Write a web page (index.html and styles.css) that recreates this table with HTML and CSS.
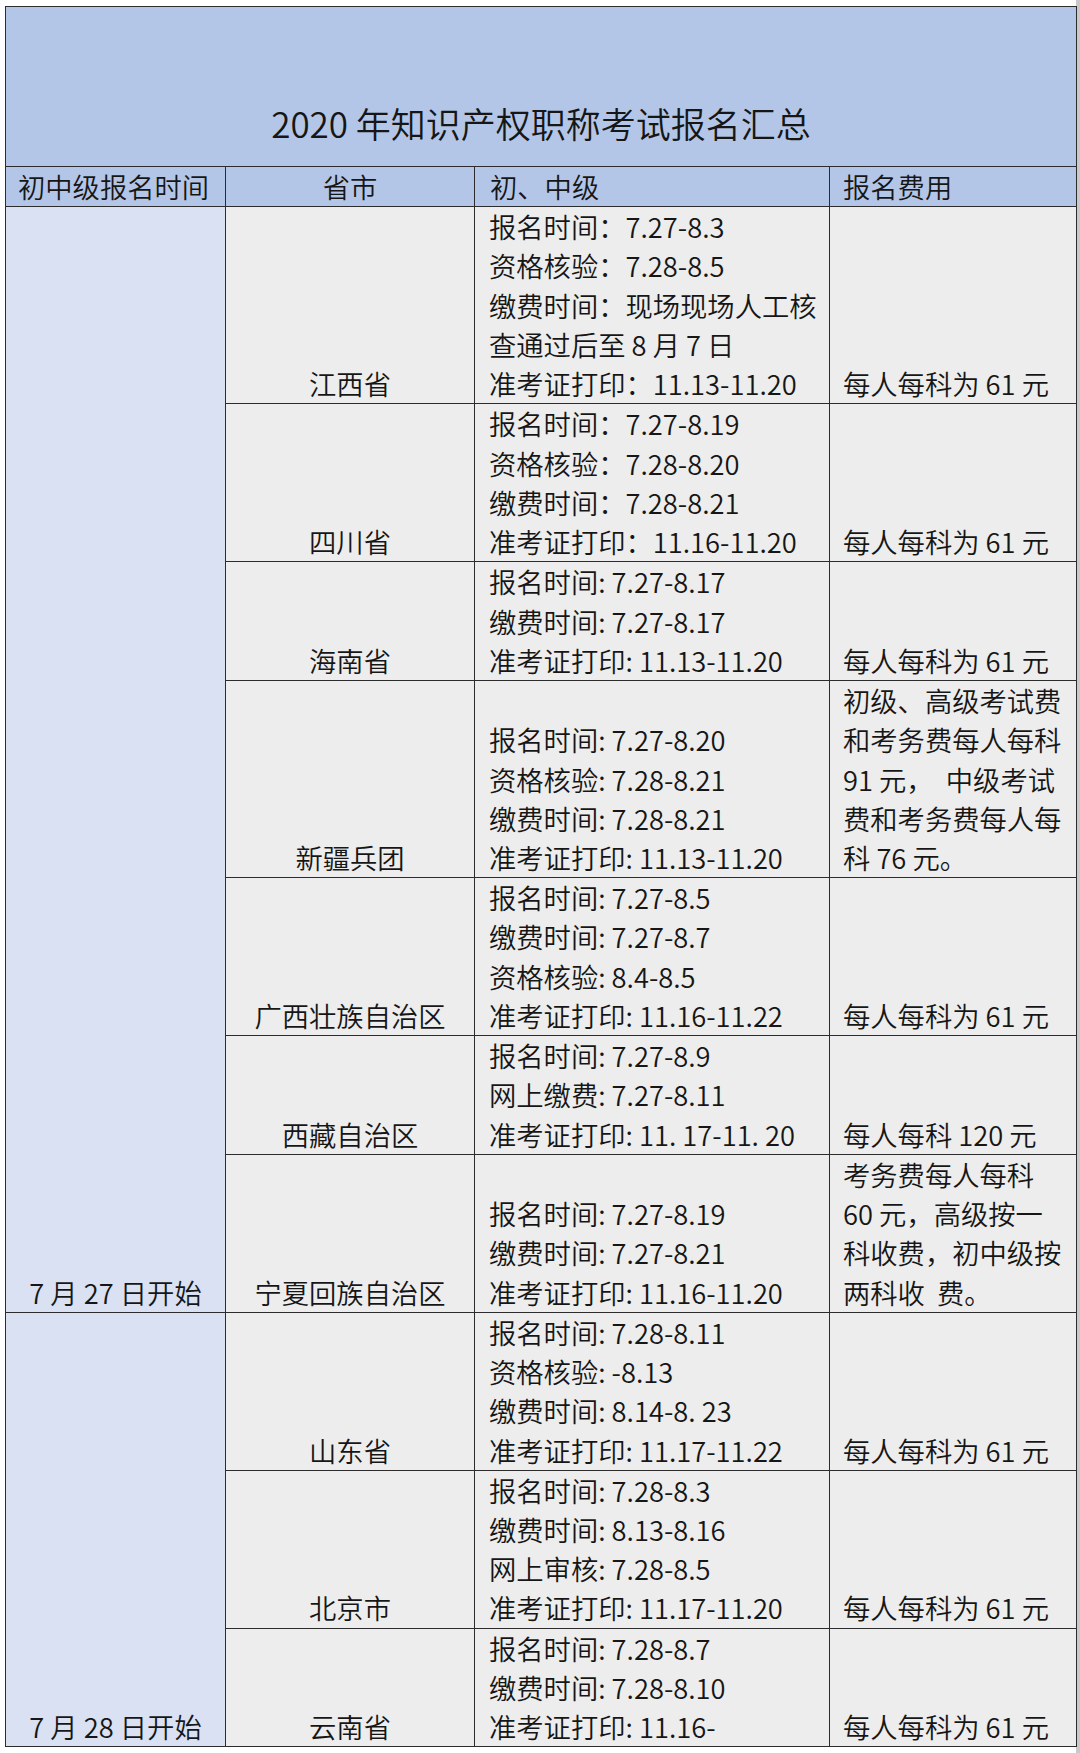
FILE: index.html
```html
<!DOCTYPE html>
<html lang="zh-CN">
<head>
<meta charset="utf-8">
<title>2020年知识产权职称考试报名汇总</title>
<link rel="stylesheet" href="styles.css">
</head>
<body>
<table class="sheet">
  <colgroup>
    <col class="c-date">
    <col class="c-prov">
    <col class="c-time">
    <col class="c-fee">
  </colgroup>
  <tr>
    <td class="title" colspan="4">2020 年知识产权职称考试报名汇总</td>
  </tr>
  <tr class="head">
    <td class="h-left">初中级报名时间</td>
    <td class="h-center">省市</td>
    <td class="h-time">初、中级</td>
    <td class="h-fee">报名费用</td>
  </tr>
  <tr>
    <td class="date" rowspan="7">7 月 27 日开始</td>
    <td class="prov">江西省</td>
    <td class="time">报名时间：7.27-8.3<br>资格核验：7.28-8.5<br>缴费时间：现场现场人工核<br>查通过后至 8 月 7 日<br>准考证打印：11.13-11.20</td>
    <td class="fee">每人每科为 61 元</td>
  </tr>
  <tr>
    <td class="prov">四川省</td>
    <td class="time">报名时间：7.27-8.19<br>资格核验：7.28-8.20<br>缴费时间：7.28-8.21<br>准考证打印：11.16-11.20</td>
    <td class="fee">每人每科为 61 元</td>
  </tr>
  <tr>
    <td class="prov">海南省</td>
    <td class="time">报名时间: 7.27-8.17<br>缴费时间: 7.27-8.17<br>准考证打印: 11.13-11.20</td>
    <td class="fee">每人每科为 61 元</td>
  </tr>
  <tr>
    <td class="prov">新疆兵团</td>
    <td class="time">报名时间: 7.27-8.20<br>资格核验: 7.28-8.21<br>缴费时间: 7.28-8.21<br>准考证打印: 11.13-11.20</td>
    <td class="fee">初级、高级考试费<br>和考务费每人每科<br>91 元，&nbsp; 中级考试<br>费和考务费每人每<br>科 76 元。</td>
  </tr>
  <tr>
    <td class="prov">广西壮族自治区</td>
    <td class="time">报名时间: 7.27-8.5<br>缴费时间: 7.27-8.7<br>资格核验: 8.4-8.5<br>准考证打印: 11.16-11.22</td>
    <td class="fee">每人每科为 61 元</td>
  </tr>
  <tr>
    <td class="prov">西藏自治区</td>
    <td class="time">报名时间: 7.27-8.9<br>网上缴费: 7.27-8.11<br>准考证打印: 11. 17-11. 20</td>
    <td class="fee">每人每科 120 元</td>
  </tr>
  <tr>
    <td class="prov">宁夏回族自治区</td>
    <td class="time">报名时间: 7.27-8.19<br>缴费时间: 7.27-8.21<br>准考证打印: 11.16-11.20</td>
    <td class="fee">考务费每人每科<br>60 元，高级按一<br>科收费，初中级按<br>两科收&nbsp; 费。</td>
  </tr>
  <tr>
    <td class="date" rowspan="3">7 月 28 日开始</td>
    <td class="prov">山东省</td>
    <td class="time">报名时间: 7.28-8.11<br>资格核验: -8.13<br>缴费时间: 8.14-8. 23<br>准考证打印: 11.17-11.22</td>
    <td class="fee">每人每科为 61 元</td>
  </tr>
  <tr>
    <td class="prov">北京市</td>
    <td class="time">报名时间: 7.28-8.3<br>缴费时间: 8.13-8.16<br>网上审核: 7.28-8.5<br>准考证打印: 11.17-11.20</td>
    <td class="fee">每人每科为 61 元</td>
  </tr>
  <tr>
    <td class="prov">云南省</td>
    <td class="time">报名时间: 7.28-8.7<br>缴费时间: 7.28-8.10<br>准考证打印: 11.16-</td>
    <td class="fee">每人每科为 61 元</td>
  </tr>
</table>
</body>
</html>
```

FILE: styles.css
```css
html, body {
  margin: 0;
  padding: 0;
}

body {
  background: linear-gradient(to right, #ffffff 1076px, #c9c9c9 1076px);
  font-family: "Noto Sans CJK SC", "Noto Sans", sans-serif;
  font-weight: 350;
  color: #161616;
  padding: 6px 0 0 5px;
  min-height: 1753px;
  box-sizing: border-box;
}

.sheet {
  border-collapse: collapse;
  table-layout: fixed;
  width: 1071px;
  font-size: 27.3px;
  line-height: 39.23px;
}

.c-date { width: 220px; }
.c-prov { width: 249px; }
.c-time { width: 355px; }
.c-fee  { width: 247px; }

.sheet td {
  border: 1px solid #2c2c2c;
  padding: 0;
  vertical-align: bottom;
  white-space: nowrap;
  overflow: hidden;
  background: #ededed;
}

.sheet td.title {
  background: #b4c6e7;
  text-align: center;
  font-size: 35px;
  line-height: 46px;
  padding: 93px 0 20px;
}

.head td {
  background: #b4c6e7;
}

.sheet td.h-left {
  padding-left: 12px;
}

.sheet td.h-center {
  text-align: center;
}

.sheet td.h-time {
  padding-left: 15px;
}

.sheet td.h-fee {
  padding-left: 13px;
}

.sheet td.date {
  background: #d9e1f2;
  text-align: center;
}

.sheet td.prov {
  text-align: center;
}

.sheet td.time {
  padding-left: 14px;
}

.sheet td.fee {
  padding-left: 13px;
}
```
